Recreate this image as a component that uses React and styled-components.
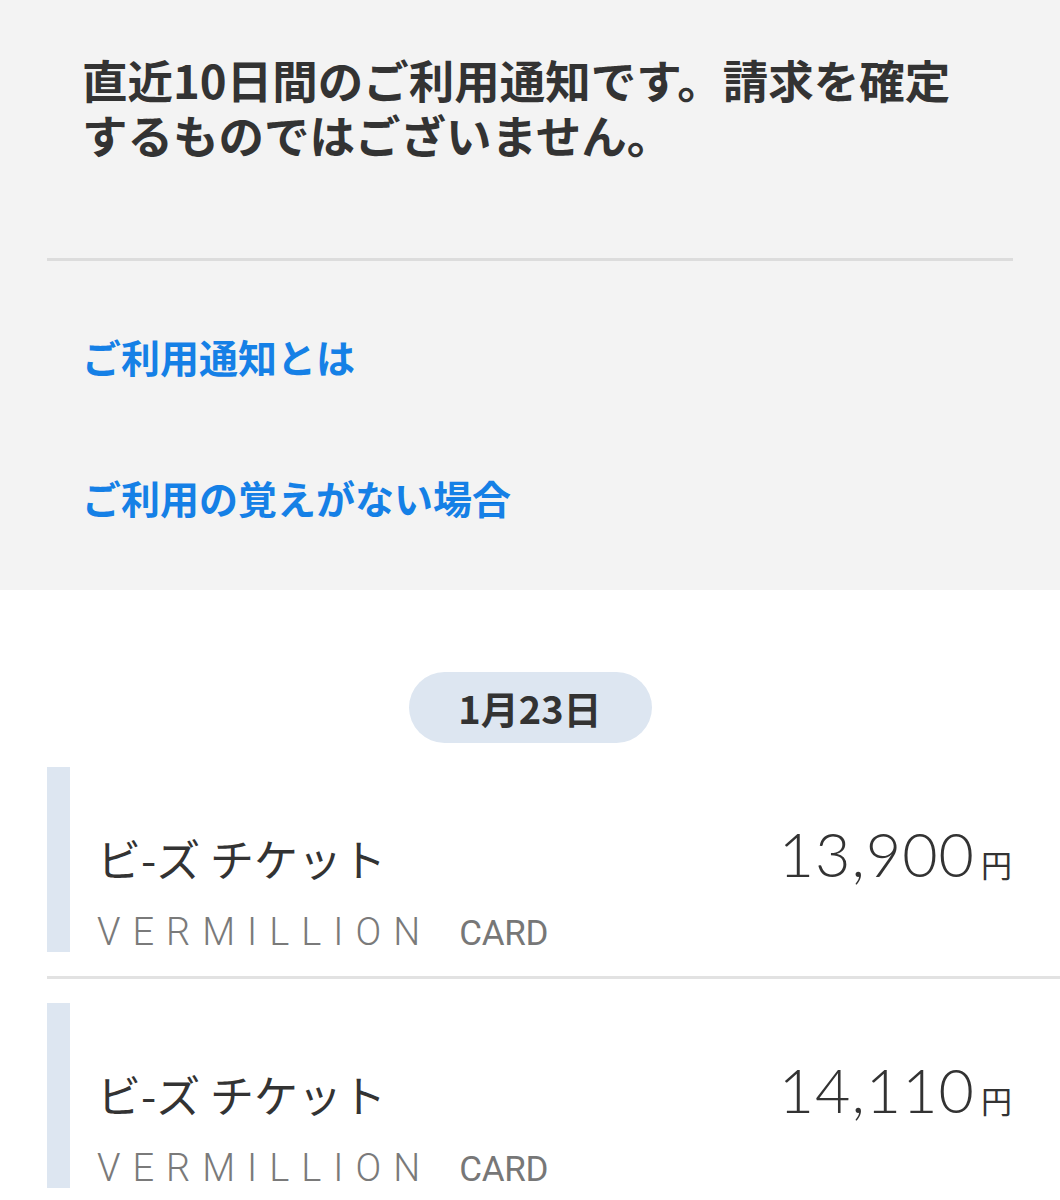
import styled, { createGlobalStyle } from 'styled-components';

const GlobalStyle = createGlobalStyle`
  html, body {
    margin: 0;
    padding: 0;
    background: #ffffff;
  }
  body {
    font-family: "Noto Sans CJK JP", "Noto Sans", sans-serif;
    color: #333333;
  }
`;

const Notice = styled.section`
  background: #f3f3f3;
  padding: 52px 47px 23px;
`;

const Lead = styled.p`
  margin: 0;
  padding: 0 35px;
  font-size: 45.5px;
  line-height: 55px;
  font-weight: 700;
  color: #333333;
`;

const Divider = styled.hr`
  margin: 96px 0 0;
  border: 0;
  height: 3px;
  background: #dcdcdc;
`;

const Links = styled.nav`
  display: flex;
  flex-direction: column;
  padding-top: 24px;
`;

const HelpLink = styled.a`
  display: flex;
  align-items: center;
  height: 141px;
  padding: 0 35px;
  font-size: 39px;
  font-weight: 700;
  color: #1580e6;
  text-decoration: none;
`;

const History = styled.section`
  padding-top: 82px;
`;

const DateRow = styled.div`
  display: flex;
  justify-content: center;
  margin-bottom: 24px;
`;

const DatePill = styled.span`
  display: inline-flex;
  align-items: center;
  justify-content: center;
  width: 243px;
  height: 71px;
  border-radius: 36px;
  background: #dde6f1;
  font-size: 38px;
  font-weight: 700;
  color: #333333;
`;

const Item = styled.article`
  margin-left: 47px;
  padding-bottom: 24px;
  margin-bottom: 24px;
  border-bottom: 3px solid #e2e2e2;
`;

const ItemBody = styled.div`
  border-left: 23px solid #dde6f1;
  padding: 60px 48px 0 27px;
  height: 185px;
  box-sizing: border-box;
`;

const TopRow = styled.div`
  display: flex;
  justify-content: space-between;
  align-items: baseline;
  height: 54px;
`;

const Merchant = styled.span`
  font-size: 44px;
  line-height: 54px;
  font-weight: 400;
  color: #333333;
`;

const Amount = styled.span`
  display: flex;
  align-items: baseline;
  color: #333333;
`;

const Figure = styled.span`
  font-family: Lato, Roboto, sans-serif;
  font-weight: 300;
  font-size: 61px;
  line-height: 54px;
  letter-spacing: 1px;
`;

const Yen = styled.span`
  margin-left: 6px;
  font-size: 31px;
  font-weight: 400;
`;

const CardRow = styled.div`
  display: flex;
  align-items: baseline;
  margin-top: 31px;
  height: 40px;
  line-height: 40px;
  color: #7a7a7a;
  font-family: Roboto, "Liberation Sans", sans-serif;
`;

const Brand = styled.span`
  font-size: 38px;
  font-weight: 300;
  letter-spacing: 12px;
  margin-right: 27px;
`;

const CardWord = styled.span`
  font-size: 35px;
  font-weight: 400;
  letter-spacing: -0.3px;
  color: #777777;
`;

const usages = [
  { id: 1, merchant: 'ビ-ズ チケット', amount: '13,900' },
  { id: 2, merchant: 'ビ-ズ チケット', amount: '14,110' },
];

export default function App() {
  return (
    <>
      <GlobalStyle />
      <Notice>
        <Lead>
          直近10日間のご利用通知です。請求を確定
          <br />
          するものではございません。
        </Lead>
        <Divider />
        <Links>
          <HelpLink href="#">ご利用通知とは</HelpLink>
          <HelpLink href="#">ご利用の覚えがない場合</HelpLink>
        </Links>
      </Notice>
      <History>
        <DateRow>
          <DatePill>1月23日</DatePill>
        </DateRow>
        {usages.map((u) => (
          <Item key={u.id}>
            <ItemBody>
              <TopRow>
                <Merchant>{u.merchant}</Merchant>
                <Amount>
                  <Figure>{u.amount}</Figure>
                  <Yen>円</Yen>
                </Amount>
              </TopRow>
              <CardRow>
                <Brand>VERMILLION</Brand>
                <CardWord>CARD</CardWord>
              </CardRow>
            </ItemBody>
          </Item>
        ))}
      </History>
    </>
  );
}
